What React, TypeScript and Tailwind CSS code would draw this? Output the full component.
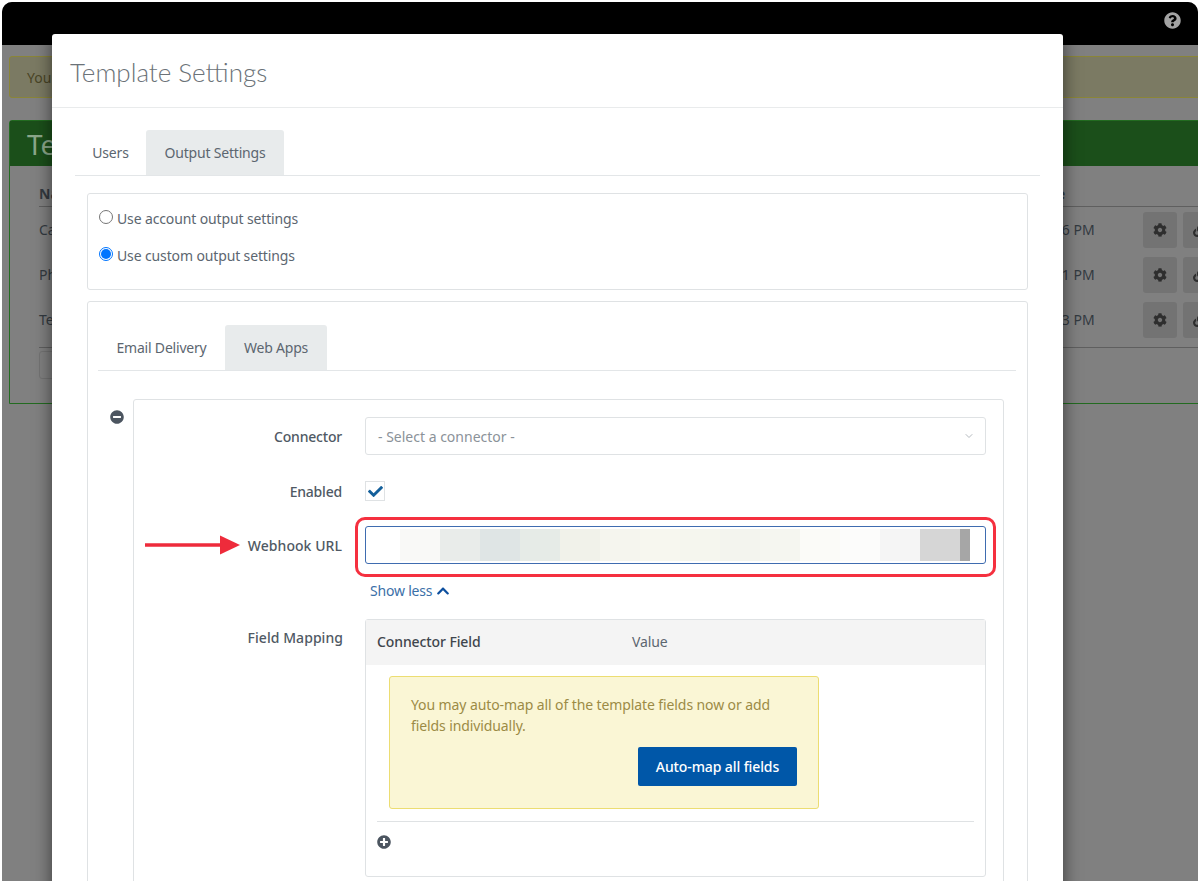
import { FaCheck, FaChevronUp, FaCog, FaMinusCircle, FaPlusCircle, FaQuestionCircle, FaLink } from "react-icons/fa";
import { LuChevronDown } from "react-icons/lu";

const blocks = ["#f9f9f7","#e9ecea","#dfe5e5","#e6ebe7","#f1f2ea","#f5f5ee","#f7f7ef","#f5f6ee","#f3f4ee","#f5f6f0","#fbfbf8","#fcfcfb","#f5f5f5","#d6d6d6"];

function BgRow({ name, time }: { name: string; time: string }) {
  return (
    <div className="flex h-[45px] items-center text-[14px] text-[#333a40]">
      <span className="w-[1003px]">{name}</span>
      <span className="w-[101px]">{time}</span>
      <span className="flex h-[36px] w-[34px] items-center justify-center rounded-[3px] bg-[#737373] text-[#2e2e2e]"><FaCog size={14} /></span>
      <span className="ml-[6px] flex h-[36px] w-[34px] shrink-0 items-center justify-center rounded-[3px] bg-[#737373] text-[#2e2e2e]"><FaLink size={14} /></span>
    </div>
  );
}

function Tabs({ first, second, firstW, secondW }: { first: string; second: string; firstW: string; secondW: string }) {
  return (
    <div className="flex border-b border-[#e3e6e8] text-[14px] tracking-[-0.2px] text-[#5c6670]">
      <div className={`${firstW} flex h-[45px] items-center justify-center`}>{first}</div>
      <div className={`${secondW} flex h-[45px] items-center justify-center rounded-t-[3px] bg-[#e8ebec]`}>{second}</div>
    </div>
  );
}

export default function App() {
  return (
    <div className="h-[883px] w-full overflow-hidden bg-white p-[2px] font-['Noto_Sans','Open_Sans',sans-serif]">
      <div className="relative h-[879px] overflow-hidden rounded-t-[10px] bg-[#808080]">
        <div className="flex h-[43px] items-center justify-end bg-black pb-[6px] pr-[17px] text-[#a3a3a3]">
          <FaQuestionCircle size={17} />
        </div>
        <div className="ml-[7px] mt-[11px] flex h-[42px] w-[1300px] items-center rounded-[3px] border border-[#8a8538] bg-[#7b7a63] px-[17px] text-[14px] text-[#4a4526]">
          You
        </div>
        <div className="ml-[7px] mt-[22px] h-[284px] w-[1300px] rounded-t-[3px] border border-[#226b20]">
          <div className="flex h-[45px] items-center bg-[#1b4f1a] px-[17px] text-[28px] text-[#8ba78a]">Te</div>
          <div className="px-[29px]">
            <div className="flex h-[41px] items-end border-b border-[#5f5f5f] pb-[2px] text-[14px] font-bold text-[#333a40]">
              <span className="w-[993px]">Name</span>
              <span>Date</span>
            </div>
            <div className="border-b border-[#5f5f5f] pb-[5px]">
              <BgRow name="Call" time="3:46 PM" />
              <BgRow name="Phone" time="4:21 PM" />
              <BgRow name="Test" time="5:13 PM" />
            </div>
            <div className="mt-[3px] h-[28px] w-[60px] rounded-[3px] border border-[#737373]" />
          </div>
        </div>

        <div className="absolute left-[50px] top-[32px] h-[900px] w-[1011px] rounded-t-[3px] bg-white text-[#5c6670] shadow-[0_0_18px_rgba(0,0,0,0.55)]">
          <div className="flex h-[74px] items-center border-b border-[#e9ebec] pl-[18px] pt-[4px] font-['Lato',sans-serif] text-[26px] font-light text-[#6b7278]">
            Template Settings
          </div>
          <div className="px-[23px] pt-[22px]">
            <Tabs first="Users" second="Output Settings" firstW="w-[71px]" secondW="w-[138px]" />
            <div className="mx-[12px] mt-[17px] h-[97px] rounded-[3px] border border-[#dfe2e4] px-[11px] pt-[6px] text-[14px] tracking-[-0.13px]">
              <div className="flex h-[36px] items-center gap-[4px]">
                <span className="mb-[2px] h-[14px] w-[14px] rounded-full border border-[#767676] bg-white" />
                Use account output settings
              </div>
              <div className="mt-[1px] flex h-[36px] items-center gap-[4px]">
                <span className="mb-[2px] flex h-[14px] w-[14px] items-center justify-center rounded-full border border-[#0075ff] bg-white">
                  <span className="h-[10px] w-[10px] rounded-full bg-[#0075ff]" />
                </span>
                Use custom output settings
              </div>
            </div>
            <div className="mx-[12px] mt-[11px] h-[640px] rounded-[3px] border border-[#dfe2e4] pl-[10px] pr-[11px] pt-[23px]">
              <Tabs first="Email Delivery" second="Web Apps" firstW="w-[127px]" secondW="w-[102px]" />
              <div className="mt-[28px] flex">
                <div className="w-[35px] pl-[12px] pt-[11px] text-[#4c5560]"><FaMinusCircle size={14} /></div>
                <div className="mr-[12px] h-[600px] flex-1 rounded-[3px] border border-[#dfe2e4] pl-[231px] pr-[17px] pt-[17px]">
                  <div className="relative">
                    <label className="absolute left-[-231px] top-[9px] w-[208px] text-right text-[14px] font-medium tracking-[-0.2px] text-[#4f5964]">Connector</label>
                    <div className="flex h-[38px] items-center justify-between rounded-[3px] border border-[#dfe2e4] pl-[12px] pr-[10px] text-[14px] text-[#8b9299]">
                      - Select a connector -
                      <LuChevronDown size={12} className="text-[#b5babf]" />
                    </div>
                  </div>
                  <div className="relative mt-[26px] h-[20px]">
                    <label className="absolute left-[-231px] top-[0px] w-[208px] text-right text-[14px] font-medium tracking-[-0.2px] text-[#4f5964]">Enabled</label>
                    <div className="flex h-[20px] w-[20px] items-center justify-center border border-[#dfe2e4] text-[#14609b]"><FaCheck size={15} /></div>
                  </div>
                  <div className="relative mt-[25px]">
                    <label className="absolute left-[-231px] top-[9px] w-[208px] text-right text-[14px] font-medium tracking-[0.05px] text-[#4f5964]">Webhook URL</label>
                    <svg className="absolute left-[-220px] top-[9px]" width="95" height="20" viewBox="0 0 95 20">
                      <path d="M0 8.2H76V11.8H0Z" fill="#ee2b3b" />
                      <path d="M75 0.5L95 10L75 19.5Z" fill="#ee2b3b" />
                    </svg>
                    <div className="flex h-[38px] items-center rounded-[3px] border border-[#3f6cb0] pl-[34px]">
                      {blocks.map((c) => (
                        <span key={c} className="h-[32px] w-[40px]" style={{ backgroundColor: c }} />
                      ))}
                      <span className="h-[32px] w-[10px] bg-[#a6a6a6]" />
                    </div>
                    <div className="absolute -left-[10px] -right-[10px] -top-[9px] h-[60px] rounded-[10px] border-[3px] border-[#f5303f]" />
                  </div>
                  <div className="mt-[16px] flex items-center gap-[4px] pl-[5px] text-[14px] tracking-[-0.2px] text-[#3b70a8]">
                    Show less <FaChevronUp size={14} className="text-[#0d4f9e]" />
                  </div>
                  <div className="relative mt-[18px] h-[258px] rounded-[3px] border border-[#dfe2e4]">
                    <label className="absolute left-[-231px] top-[7px] w-[208px] text-right text-[14px] font-medium tracking-[0.05px] text-[#4f5964]">Field Mapping</label>
                    <div className="flex h-[45px] items-center bg-[#f4f4f4] pb-[3px] pl-[11px] text-[14px] tracking-[-0.1px]">
                      <span className="w-[255px] font-medium text-[#3f464d]">Connector Field</span>
                      <span className="text-[#5c6670]">Value</span>
                    </div>
                    <div className="ml-[23px] mt-[11px] h-[133px] w-[430px] rounded-[3px] border border-[#ecdd72] bg-[#faf6d5] px-[21px] pt-[17px] text-[14px] leading-[21px] tracking-[-0.1px] text-[#9c8b45]">
                      <p>You may auto-map all of the template fields now or add fields individually.</p>
                      <div className="mt-[11px] flex justify-end">
                        <button className="flex h-[39px] w-[159px] items-center justify-center rounded-[2px] bg-[#0057a8] text-[14px] font-medium text-white">Auto-map all fields</button>
                      </div>
                    </div>
                    <div className="mx-[11px] mt-[12px] border-t border-[#dfe2e4] pt-[13px] text-[#4c5560]">
                      <FaPlusCircle size={14} />
                    </div>
                  </div>
                </div>
              </div>
            </div>
          </div>
        </div>
      </div>
    </div>
  );
}
